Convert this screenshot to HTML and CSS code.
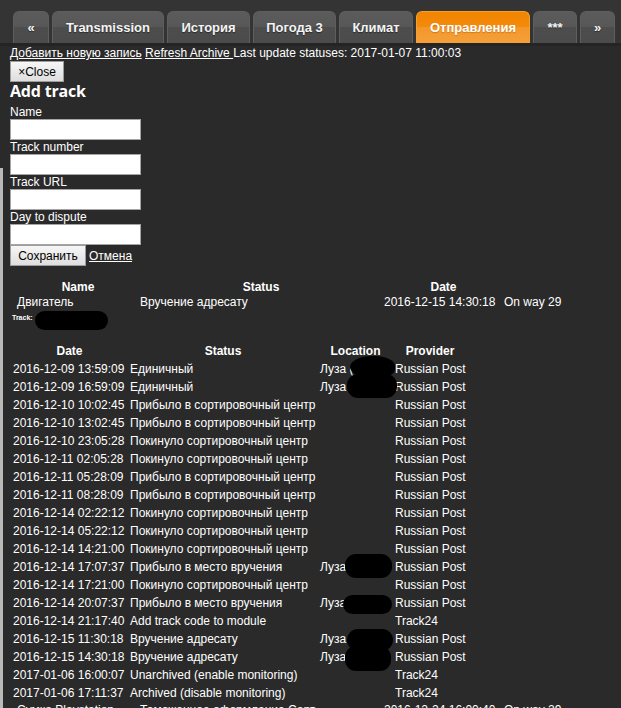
FILE: index.html
```html
<!DOCTYPE html>
<html lang="ru">
<head>
<meta charset="utf-8">
<title>Отправления</title>
<link rel="stylesheet" href="styles.css">
</head>
<body>
<div class="edge"></div>
<nav class="nav">
  <a class="tab w-prev">«</a>
  <a class="tab w-trans">Transmission</a>
  <a class="tab w-hist">История</a>
  <a class="tab w-weather">Погода 3</a>
  <a class="tab w-climate">Климат</a>
  <a class="tab w-send active">Отправления</a>
  <a class="tab w-more">***</a>
  <a class="tab w-next">»</a>
</nav>
<main class="page">
  <div class="topline"><a href="#">Добавить новую запись</a> <a href="#">Refresh Archive </a>Last update statuses: 2017-01-07 11:00:03</div>
  <form class="form">
    <button type="button" class="btn btn-close">×Close</button>
    <h3 class="title">Add track</h3>
    <label class="lbl">Name</label>
    <input class="inp" type="text">
    <label class="lbl">Track number</label>
    <input class="inp" type="text">
    <label class="lbl">Track URL</label>
    <input class="inp" type="text">
    <label class="lbl">Day to dispute</label>
    <input class="inp" type="text">
    <div class="actions">
      <button type="button" class="btn btn-save">Сохранить</button>
      <a href="#" class="cancel">Отмена</a>
    </div>
  </form>

  <table class="tracks">
    <colgroup><col class="k1"><col class="k2"><col class="k3"><col class="k4"></colgroup>
    <tr><th class="h-name">Name</th><th>Status</th><th class="h-date">Date</th><th></th></tr>
    <tr><td class="name">Двигатель</td><td>Вручение адресату</td><td class="date">2016-12-15 14:30:18</td><td class="onway">On way 29</td></tr>
    <tr><td colspan="4"><div class="trackline"><span class="tlabel">Track:</span><span class="redact-code"></span></div></td></tr>
    <tr><td colspan="4">
      <table class="history">
        <colgroup><col class="hc1"><col class="hc2"><col class="hc3"><col class="hc4"></colgroup>
        <tr><th>Date</th><th>Status</th><th>Location</th><th>Provider</th></tr>
        <tr><td>2016-12-09 13:59:09</td><td>Единичный</td><td class="loc">Луза (<span class="blob b1"></span></td><td>Russian Post</td></tr>
        <tr><td>2016-12-09 16:59:09</td><td>Единичный</td><td class="loc">Луза<span class="blob b2"></span></td><td>Russian Post</td></tr>
        <tr><td>2016-12-10 10:02:45</td><td>Прибыло в сортировочный центр</td><td></td><td>Russian Post</td></tr>
        <tr><td>2016-12-10 13:02:45</td><td>Прибыло в сортировочный центр</td><td></td><td>Russian Post</td></tr>
        <tr><td>2016-12-10 23:05:28</td><td>Покинуло сортировочный центр</td><td></td><td>Russian Post</td></tr>
        <tr><td>2016-12-11 02:05:28</td><td>Покинуло сортировочный центр</td><td></td><td>Russian Post</td></tr>
        <tr><td>2016-12-11 05:28:09</td><td>Прибыло в сортировочный центр</td><td></td><td>Russian Post</td></tr>
        <tr><td>2016-12-11 08:28:09</td><td>Прибыло в сортировочный центр</td><td></td><td>Russian Post</td></tr>
        <tr><td>2016-12-14 02:22:12</td><td>Покинуло сортировочный центр</td><td></td><td>Russian Post</td></tr>
        <tr><td>2016-12-14 05:22:12</td><td>Покинуло сортировочный центр</td><td></td><td>Russian Post</td></tr>
        <tr><td>2016-12-14 14:21:00</td><td>Покинуло сортировочный центр</td><td></td><td>Russian Post</td></tr>
        <tr><td>2016-12-14 17:07:37</td><td>Прибыло в место вручения</td><td class="loc">Луза<span class="blob b3"></span></td><td>Russian Post</td></tr>
        <tr><td>2016-12-14 17:21:00</td><td>Покинуло сортировочный центр</td><td></td><td>Russian Post</td></tr>
        <tr><td>2016-12-14 20:07:37</td><td>Прибыло в место вручения</td><td class="loc">Луза<span class="blob b4"></span></td><td>Russian Post</td></tr>
        <tr><td>2016-12-14 21:17:40</td><td>Add track code to module</td><td></td><td>Track24</td></tr>
        <tr><td>2016-12-15 11:30:18</td><td>Вручение адресату</td><td class="loc">Луза<span class="blob b5"></span></td><td>Russian Post</td></tr>
        <tr><td>2016-12-15 14:30:18</td><td>Вручение адресату</td><td class="loc">Луза<span class="blob b6"></span></td><td>Russian Post</td></tr>
        <tr><td>2017-01-06 16:00:07</td><td>Unarchived (enable monitoring)</td><td></td><td>Track24</td></tr>
        <tr><td>2017-01-06 17:11:37</td><td>Archived (disable monitoring)</td><td></td><td>Track24</td></tr>
      </table>
    </td></tr>
    <tr><td class="name">Сумка Playstation</td><td>Таможенное оформление     Сорт.</td><td class="date">2016-12-24 16:00:40</td><td class="onway">On way 29</td></tr>
  </table>
</main>
</body>
</html>
```

FILE: styles.css
```css
html, body {
  margin: 0;
  padding: 0;
}
body {
  background: #2a2a2a;
  color: #ffffff;
  font-family: "Liberation Sans", Arial, sans-serif;
  font-size: 12px;
  line-height: 14px;
  overflow: hidden;
}
a { color: #ffffff; }

.edge {
  position: fixed;
  left: 0;
  top: 168px;
  bottom: 0;
  width: 3px;
  background: #b9b9b9;
}

/* ---------- tabs ---------- */
.nav {
  display: flex;
  align-items: flex-end;
  gap: 3px;
  height: 46px;
  padding-left: 13px;
  box-sizing: border-box;
  background: #343434;
  border-bottom: 3px solid #242424;
}
.tab {
  height: 32px;
  box-sizing: border-box;
  display: flex;
  align-items: center;
  justify-content: center;
  border: 1px solid #5e5e5e;
  border-bottom: 0;
  border-radius: 6px 6px 0 0;
  background: linear-gradient(#5b5b5b 0%, #575757 50%, #4d4d4d 50%, #4b4b4b 100%);
  color: #f4f4f4;
  font-weight: bold;
  font-size: 13px;
  text-decoration: none;
  text-shadow: 0 1px 1px rgba(0,0,0,0.45);
}
.tab.active {
  border-color: #f5a030;
  background: linear-gradient(#f28400 0%, #f38b0c 50%, #f4972a 50%, #f5a03a 100%);
  color: #ffffff;
  text-shadow: 0 1px 1px rgba(120,60,0,0.35);
}
.w-prev { width: 36px; }
.w-trans { width: 112px; }
.w-hist { width: 83px; }
.w-weather { width: 83px; }
.w-climate { width: 74px; }
.w-send { width: 114px; }
.w-more { width: 44px; }
.w-next { width: 35px; }

/* ---------- page ---------- */
.page {
  padding: 0 10px;
}
.topline {
  height: 14px;
  white-space: nowrap;
}

.form {
  display: flex;
  flex-direction: column;
  align-items: flex-start;
  margin: 0;
}
.btn {
  font-family: "Liberation Sans", Arial, sans-serif;
  font-size: 12px;
  color: #000;
  height: 21px;
  padding: 0 7px;
  border: 1px solid #9d9d9d;
  background: linear-gradient(#f6f6f6, #dedede);
  border-radius: 0;
}
.btn-close {
  margin-top: 1px;
  width: 54px;
}
.title {
  margin: 0;
  font-family: "Open Sans", "DejaVu Sans", sans-serif;
  font-weight: bold;
  font-size: 16px;
  line-height: 18px;
  letter-spacing: -0.2px;
}
.lbl {
  display: block;
  height: 14px;
  line-height: 14px;
}
.title + .lbl { margin-top: 5px; }
.inp {
  width: 131px;
  height: 21px;
  box-sizing: border-box;
  margin: 0;
  border: 1px solid #a5a5a5;
  background: #fff;
}
.actions {
  display: flex;
  align-items: center;
  gap: 3px;
}
.btn-save { width: 76px; }
.cancel { line-height: 14px; }

/* ---------- tracks table ---------- */
.tracks {
  margin-top: 14px;
  border-collapse: separate;
  border-spacing: 0;
  table-layout: fixed;
  width: 601px;
  line-height: 15px;
}
.tracks > tbody > tr > td,
.tracks > tbody > tr > th {
  padding: 0;
  vertical-align: top;
  white-space: nowrap;
}
.tracks th { text-align: center; }
.k1 { width: 130px; }
.k2 { width: 242px; }
.k3 { width: 121px; }
.tracks th.h-name { padding-left: 6px; }
.tracks th.h-date { padding-left: 2px; }
.tracks td.name { padding-left: 7px; }
.tracks td.date { padding-left: 2px; }
.tracks td.onway { padding-left: 1px; }

.trackline {
  display: flex;
  align-items: flex-start;
  height: 31px;
  padding-left: 2px;
}
.tlabel {
  font-size: 7px;
  font-weight: bold;
  line-height: 7px;
  margin-top: 4px;
}
.redact-code {
  width: 73px;
  height: 19px;
  margin: 1px 0 0 2px;
  border-radius: 10px;
  background: #000;
}

/* ---------- history ---------- */
.history {
  border-collapse: separate;
  border-spacing: 2px;
  table-layout: fixed;
  width: 458px;
  line-height: 14px;
}
.history td, .history th {
  padding: 1px;
  white-space: nowrap;
  overflow: visible;
}
.history th { text-align: center; }
.hc1 { width: 115px; }
.hc2 { width: 188px; }
.hc3 { width: 73px; }
.hc4 { width: 72px; }
.history td.loc { position: relative; }
.blob {
  position: absolute;
  background: #000;
  border-radius: 11px;
}
.b1 { left: 31px; top: -5px; width: 45px; height: 22px; border-radius: 50% 45% 40% 50%; }
.b2 { left: 28px; top: -5px; width: 50px; height: 24px; }
.b3 { left: 26px; top: -5px; width: 47px; height: 24px; }
.b4 { left: 24px; top: 0px; width: 49px; height: 19px; }
.b5 { left: 28px; top: -2px; width: 46px; height: 22px; }
.b6 { left: 26px; top: -3px; width: 46px; height: 25px; }
```
